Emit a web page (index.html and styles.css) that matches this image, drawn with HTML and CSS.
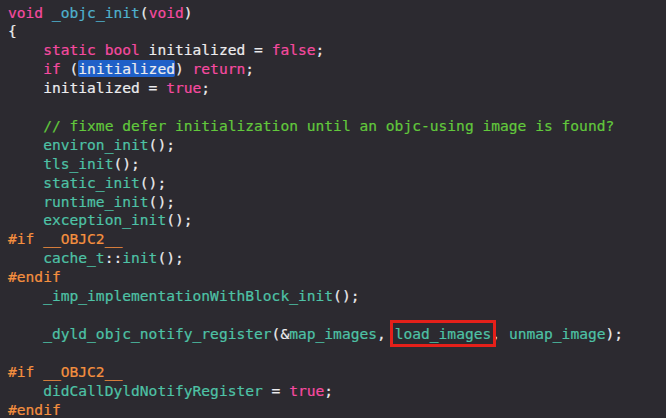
FILE: index.html
```html
<!DOCTYPE html>
<html lang="en">
<head>
    <meta charset="UTF-8">
    <meta name="viewport" content="width=device-width, initial-scale=1.0">
    <title>objc-os.mm - _objc_init</title>
    <link rel="stylesheet" href="styles.css">
</head>
<body>
    <div class="editor">
<pre class="code"><span class="kw">void</span> <span class="decl">_objc_init</span>(<span class="kw">void</span>)
{
    <span class="kw">static</span> <span class="kw">bool</span> initialized = <span class="kw">false</span>;
    <span class="kw">if</span> (<span class="sel">initialized</span>) <span class="kw">return</span>;
    initialized = <span class="kw">true</span>;

    <span class="comment">// fixme defer initialization until an objc-using image is found?</span>
    <span class="fn">environ_init</span>();
    <span class="fn">tls_init</span>();
    <span class="fn">static_init</span>();
    <span class="fn">runtime_init</span>();
    <span class="fn">exception_init</span>();
<span class="pp">#if __OBJC2__</span>
    <span class="fn">cache_t</span>::<span class="fn">init</span>();
<span class="pp">#endif</span>
    <span class="fn">_imp_implementationWithBlock_init</span>();

    <span class="fn">_dyld_objc_notify_register</span>(&amp;<span class="fn">map_images</span>, <span class="fn mark">load_images</span>, <span class="fn">unmap_image</span>);

<span class="pp">#if __OBJC2__</span>
    <span class="fn">didCallDyldNotifyRegister</span> = <span class="kw">true</span>;
<span class="pp">#endif</span>
</pre>
    </div>
</body>
</html>
```

FILE: styles.css
```css
html, body {
    margin: 0;
    height: 100%;
    background-color: #2c2a30;
}

.editor {
    height: 418px;
    overflow: hidden;
}

.code {
    margin: 0;
    padding: 3.5px 8px 0;
    font-family: "DejaVu Sans Mono", "Liberation Mono", monospace;
    font-size: 14.6px;
    line-height: 18.9px;
    color: #ececee;
    -webkit-text-stroke: 0.2px currentColor;
}

/* syntax colours */
.kw {
    color: #f64aa0;
}

.decl {
    color: #4fb1cd;
}

.fn {
    color: #4ec2a6;
}

.comment {
    color: #62c83c;
}

.pp {
    color: #f5903f;
}

/* selected word */
.sel {
    background-color: #1f60c8;
    border-radius: 2px;
}

/* red annotation box */
.mark {
    outline: 3px solid #e5201a;
    outline-offset: 2px;
}
```
